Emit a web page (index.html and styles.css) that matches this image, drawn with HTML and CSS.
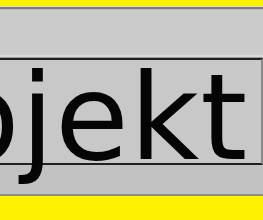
FILE: index.html
```html
<!DOCTYPE html>
<html>
<head>
<meta charset="utf-8">
<link rel="stylesheet" href="styles.css">
</head>
<body>
<div class="frame">
  <div class="band"></div>
  <div class="bar"><div class="bar-inner"></div></div>
  <div class="field">
    <div class="field-inner">
      <span class="label">Objekt</span>
    </div>
  </div>
  <div class="below"></div>
  <div class="band band-bottom"></div>
</div>
</body>
</html>
```

FILE: styles.css
```css
html, body {
  margin: 0;
  padding: 0;
  background: #fff200;
}
.frame {
  width: 263px;
  height: 220px;
  display: flex;
  flex-direction: column;
  overflow: hidden;
}
.band {
  height: 6px;
  background: #fff200;
  flex: none;
}
.band-bottom {
  flex: 1;
}
.bar {
  height: 50px;
  border-top: 1px solid #e4e2c0;
  flex: none;
  display: flex;
}
.bar-inner {
  flex: 1;
  border-top: 2px solid #7c7c7c;
  background: linear-gradient(#b9b9b9 0, #b9b9b9 1px, #cbcbcb 1px, #cbcbcb calc(100% - 2px), #dadada calc(100% - 2px));
}
.field {
  height: 107px;
  flex: none;
  border-top: 1px solid #9c9c9c;
  display: flex;
}
.field-inner {
  flex: 1;
  border-top: 2px solid #202020;
  border-bottom: 2px solid #202020;
  border-right: 2px solid #8a8a8a;
  background: #c8c8c8;
  padding-top: 8px;
  white-space: nowrap;
  overflow: visible;
}
.label {
  display: block;
  margin-left: -152px;
  letter-spacing: 1px;
  font-family: "DejaVu Sans", sans-serif;
  font-size: 120px;
  line-height: 100px;
  color: #050505;
  position: relative;
  z-index: 1;
}
.below {
  height: 29px;
  flex: none;
  background: #c2c2c2;
  border-bottom: 2px solid #8c8c8c;
}
```
